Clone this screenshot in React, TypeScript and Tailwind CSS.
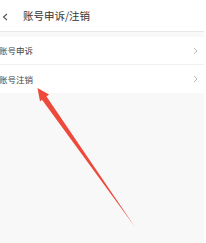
const rows = ["账号申诉", "账号注销"];

export default function App() {
  return (
    <div
      className="relative h-[243px] w-[206px] overflow-hidden bg-white"
      style={{ fontFamily: '"Noto Sans CJK SC", "Noto Sans", sans-serif' }}
    >
      <div className="flex h-full w-[204px] flex-col bg-[#f8f8f8]">
        {/* Header */}
        <div className="flex h-[32px] items-center border-b border-[#e8e8e8] bg-white pt-[2px]">
          <svg width="23" height="10" viewBox="0 0 23 10" className="shrink-0">
            <polyline points="7,2 3.5,5 7,8" fill="none" stroke="#555" strokeWidth="1.1" />
          </svg>
          <span className="text-[10.5px] leading-none text-[#333]">账号申诉/注销</span>
        </div>

        {/* List */}
        <div className="mt-[5px] bg-white">
          {rows.map((label, i) => (
            <div
              key={label}
              className={`flex h-[28px] items-center justify-between pr-[6px] ${
                i === 0 ? "border-b border-[#f0f0f0]" : ""
              }`}
            >
              <span className="-ml-[1px] text-[8.5px] leading-none text-[#444]">{label}</span>
              <svg width="5" height="8" viewBox="0 0 5 8">
                <polyline points="1,1 4,4 1,7" fill="none" stroke="#b0b0b0" strokeWidth="0.9" />
              </svg>
            </div>
          ))}
        </div>
      </div>

      {/* Annotation arrow */}
      <svg className="absolute left-0 top-0" width="206" height="243" viewBox="0 0 206 243">
        <polygon
          points="37.5,88 49,94.5 46.5,96.5 135,227 42,99.8 40,101.5"
          fill="#ee4a3c"
        />
      </svg>
    </div>
  );
}
